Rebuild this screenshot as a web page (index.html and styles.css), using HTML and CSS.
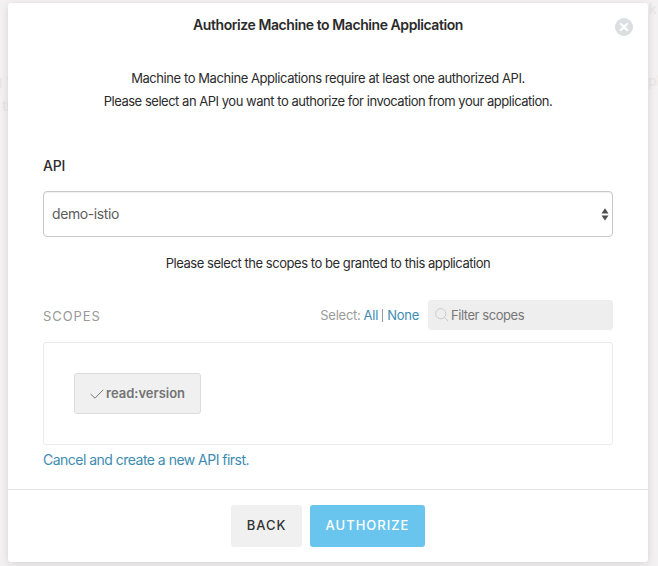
FILE: index.html
```
<!DOCTYPE html>
<html lang="en">
<head>
<meta charset="utf-8">
<title>Authorize Machine to Machine Application</title>
<link rel="stylesheet" href="styles.css">
</head>
<body>
<div class="behind" aria-hidden="true">
  <span class="ghost ghost-a">g t</span>
  <span class="ghost ghost-b">th</span>
  <span class="ghost ghost-c">k</span>
  <span class="ghost ghost-d">pl</span>
</div>
<section class="modal">
  <header class="modal-header">
    <h1 class="title"><span>Authorize Machine to Machine Application</span></h1>
    <button class="close" aria-label="Close">
      <svg width="18" height="18" viewBox="0 0 18 18"><circle cx="9" cy="9" r="9" fill="#dadfe2"/><path d="M5.2 5.2l7.6 7.6M12.8 5.2l-7.6 7.6" stroke="#fff" stroke-width="2.2"/></svg>
    </button>
  </header>
  <main class="modal-body">
    <div class="intro">
      <p><span class="intro-a">Machine to Machine Applications require at least one authorized API.</span></p>
      <p><span class="intro-b">Please select an API you want to authorize for invocation from your application.</span></p>
    </div>
    <div class="label"><span>API</span></div>
    <div class="select">
      <span class="select-value">demo-istio</span>
      <svg width="8" height="13" viewBox="0 0 8 13"><path d="M4 0.2L7.5 5.4H.5zM4 12.6L7.5 7.5H.5z" fill="#4f4f4f"/></svg>
    </div>
    <p class="hint"><span>Please select the scopes to be granted to this application</span></p>
    <div class="toolbar">
      <span class="scopes-label">SCOPES</span>
      <div class="pick"><span class="pick-label">Select:</span><a class="all">All</a><i class="bar"></i><a class="none">None</a></div>
      <div class="filter">
        <svg width="14" height="14" viewBox="0 0 14 14" fill="none" stroke="#cbcbcb" stroke-width="1"><circle cx="5.7" cy="5.7" r="5.1"/><path d="M9.4 9.4L13.2 13.2"/></svg>
        <span class="filter-text">Filter scopes</span>
      </div>
    </div>
    <div class="scopes">
      <div class="scope">
        <svg width="14" height="10" viewBox="0 0 14 10"><path d="M.6 5L5 9.2L13.2.8" fill="none" stroke="#777" stroke-width="1"/></svg>
        <span class="scope-name">read:version</span>
      </div>
    </div>
    <a class="cancel"><span>Cancel and create a new API first.</span></a>
  </main>
  <footer class="modal-footer">
    <button class="btn back"><span>BACK</span></button>
    <button class="btn authorize"><span>AUTHORIZE</span></button>
  </footer>
</section>
</body>
</html>
```
FILE: styles.css
```
* { box-sizing: border-box; }
body {
  margin: 0;
  width: 658px;
  height: 566px;
  overflow: hidden;
  padding: 3px 10px 4px 8px;
  background: #f3f1f2;
  font: 13px/23px Inter, "Liberation Sans", sans-serif;
  color: #333;
}
h1, p { margin: 0; font: inherit; }
button { border: 0; padding: 0; font: inherit; }
.ghost { position: absolute; font-size: 14px; color: #e7e5e6; }
.ghost-a { left: -6px; top: 69px; }
.ghost-b { left: 2px; top: 94px; }
.ghost-c { left: 649px; top: -3px; }
.ghost-d { left: 648px; top: 69px; }
.modal {
  position: relative;
  display: flex;
  flex-direction: column;
  width: 640px;
  height: 559px;
  background: #fff;
  border-radius: 3px;
  box-shadow: 0 2px 10px rgba(0, 0, 0, .12);
}
.modal-header { position: relative; height: 64px; padding-top: 10px; text-align: center; }
.title { font-size: 14px; font-weight: 600; color: #2b2b2b; letter-spacing: -.43px; }
.close { position: absolute; right: 15px; top: 15px; width: 18px; height: 18px; background: none; }
.close svg { display: block; }
.modal-body { height: 422px; padding: 0 35px; display: flex; flex-direction: column; }
.intro { text-align: center; height: 87px; color: #2b2b2b; }
.intro-a { letter-spacing: -.43px; }
.intro-b { letter-spacing: -.475px; }
.label { height: 37px; font-size: 14px; font-weight: 500; letter-spacing: -.2px; color: #2b2b2b; }
.select {
  display: flex;
  align-items: center;
  justify-content: space-between;
  height: 46px;
  padding: 0 3px 0 8px;
  border: 1px solid #c8c8c8;
  border-radius: 4px;
  box-shadow: inset 0 1px 1px rgba(0, 0, 0, .06);
  font-size: 14px;
  color: #5c5c5c;
}
.select-value { letter-spacing: -.4px; padding-bottom: 2px; }
.hint { margin-top: 15px; height: 48px; text-align: center; letter-spacing: -.45px; color: #2b2b2b; }
.toolbar { display: flex; align-items: center; height: 30px; }
.scopes-label { padding-top: 2px; letter-spacing: .9px; color: #999; }
.pick { display: flex; align-items: center; margin-left: auto; color: #9b9b9b; letter-spacing: -.25px; }
.pick a { color: #3d8bb0; }
.bar { width: 1px; height: 13px; margin: 0 4px; background: #999; }
.all { margin-left: 3px; }
.filter {
  display: flex;
  align-items: center;
  gap: 2px;
  width: 185px;
  height: 30px;
  margin-left: 9px;
  padding-left: 7px;
  border-radius: 3px;
  background: #eee;
  color: #777;
  letter-spacing: -.45px;
}
.scopes {
  height: 103px;
  margin-top: 12px;
  padding: 30px;
  border: 1px solid #ebebeb;
  border-radius: 3px;
}
.scope {
  display: flex;
  align-items: center;
  gap: 2px;
  width: 127px;
  height: 41px;
  padding-left: 15px;
  border: 1px solid #dcdcdc;
  border-radius: 3px;
  background: #f0f0f0;
  font-weight: 600;
  color: #747474;
}
.cancel { margin-top: 3px; font-size: 14px; letter-spacing: -.52px; color: #3d8bb0; }
.modal-footer {
  display: flex;
  justify-content: center;
  gap: 8px;
  height: 73px;
  padding-top: 15px;
  border-top: 1px solid #e3e3e3;
}
.btn { height: 42px; padding-bottom: 1px; border-radius: 3px; font-size: 13px; font-weight: 500; letter-spacing: 1px; }
.back { width: 71px; background: #f0f0f0; color: #333; }
.authorize { width: 115px; background: #6ac5ee; color: #fff; }
```
